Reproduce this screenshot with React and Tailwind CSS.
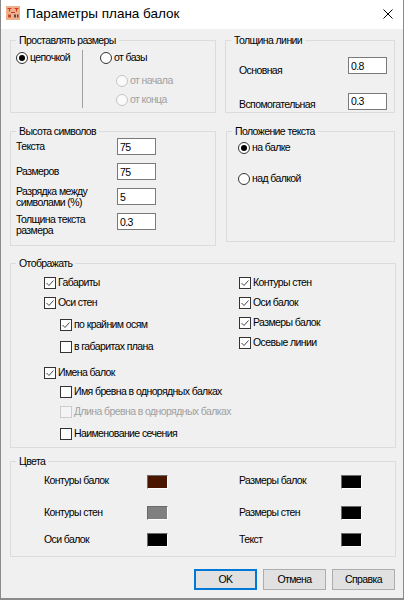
import React from 'react'

function AppIcon() {
  return (
    <svg width="14" height="14" viewBox="0 0 14 14" className="mt-[6px] ml-[5px] self-start">
      <rect width="14" height="14" fill="#efb08c" />
      <path d="M1.5 2.5h4M3.5 2.5v3M8.5 2.5h4M10.5 2.5v3" stroke="#d2361e" strokeWidth="1.2" fill="none" />
      <path d="M5 6.5h4" stroke="#c0392b" strokeWidth="1" />
      <rect x="2" y="8.5" width="3" height="3" fill="#c44a30" />
      <rect x="8" y="8.5" width="2" height="3" fill="#5b4a42" />
      <rect x="11" y="8.5" width="1.5" height="3" fill="#5b4a42" />
    </svg>
  )
}

function GroupBox({ title, className, children }) {
  return (
    <div className={`relative border border-[#dcdcdc] ${className}`}>
      <span className="absolute left-[5px] top-[-7px] bg-[#f0f0f0] px-[3px] leading-[13px] whitespace-nowrap">{title}</span>
      {children}
    </div>
  )
}

function Radio({ checked, disabled, label }) {
  return (
    <div className="flex h-[12px] items-center">
      <span
        className={`flex h-[12px] w-[12px] shrink-0 items-center justify-center rounded-full border ${
          disabled ? 'border-[#c4c4c4] bg-[#fafafa]' : 'border-[#333333] bg-white'
        }`}
      >
        {checked && <span className="h-[6px] w-[6px] rounded-full bg-black" />}
      </span>
      <span className={`ml-[2px] whitespace-nowrap ${disabled ? 'text-[#a0a0a0]' : ''}`}>{label}</span>
    </div>
  )
}

function Check({ checked, disabled, label, className = '' }) {
  return (
    <div className={`flex h-[12px] items-center ${className}`}>
      <span
        className={`flex h-[12px] w-[12px] shrink-0 items-center justify-center border ${
          disabled ? 'border-[#cccccc] bg-[#f4f4f4]' : 'border-[#333333] bg-white'
        }`}
      >
        {checked && (
          <svg width="10" height="10" viewBox="0 0 10 10">
            <path d="M1.5 5l2.5 2.5 4.5-5" fill="none" stroke="#444" strokeWidth="1" />
          </svg>
        )}
      </span>
      <span className={`ml-[2px] whitespace-nowrap ${disabled ? 'text-[#a0a0a0]' : ''}`}>{label}</span>
    </div>
  )
}

function Field({ value }) {
  return (
    <input
      readOnly
      value={value}
      className="h-[17px] w-[39px] shrink-0 border border-[#7a7a7a] bg-white pl-[2px] leading-[15px] outline-none"
    />
  )
}

function Swatch({ color }) {
  return (
    <span className={`h-[14px] w-[21px] shrink-0 border border-t-[#6a6a6a] border-l-[#6a6a6a] border-r-white border-b-white ${color}`} />
  )
}

function SizeRow({ label, value, top }) {
  return (
    <div className={`flex h-[17px] ${top ? 'items-start' : 'items-center'}`}>
      <span className={`w-[101px] leading-[11px] ${top ? 'mt-[1px]' : ''}`}>{label}</span>
      <Field value={value} />
    </div>
  )
}

export default function App() {
  return (
    <div className="flex h-[600px] w-[404px] flex-col border-x border-b-2 border-[#8a8a8a] bg-[#f0f0f0] font-['Liberation_Sans',Arial,sans-serif] text-[10.5px] tracking-[-0.6px] text-black">
      {/* Title bar */}
      <div className="flex h-[29px] shrink-0 bg-white">
        <AppIcon />
        <span className="ml-[6px] mt-[5px] text-[13.5px] leading-[18px] tracking-normal">Параметры плана балок</span>
        <svg width="10" height="10" viewBox="0 0 10 10" className="ml-auto mr-[10px] mt-[9px]">
          <path d="M0.5 0.5l9 9M9.5 0.5l-9 9" stroke="#000" strokeWidth="1" />
        </svg>
      </div>

      <div className="flex flex-1 flex-col pl-[9px] pr-[7px]">
        {/* Row 1 */}
        <div className="mt-[11px] flex gap-[9px]">
          <GroupBox title="Проставлять размеры" className="h-[73px] w-[206px]">
            <div className="flex h-full pl-[5px] pt-[9px] pb-[4px]">
              <div className="w-[66px] pt-[2px]">
                <Radio checked label="цепочкой" />
              </div>
              <div className="w-px bg-[#a0a0a0]" />
              <div className="pl-[17px] pt-[2px]">
                <Radio label="от базы" />
                <div className="ml-[16px] mt-[11px]">
                  <Radio disabled label="от начала" />
                </div>
                <div className="ml-[16px] mt-[7px]">
                  <Radio disabled label="от конца" />
                </div>
              </div>
            </div>
          </GroupBox>

          <GroupBox title="Толщина линии" className="h-[73px] w-[170px]">
            <div className="pl-[13px] pr-[7px] pt-[16px]">
              <div className="flex items-start justify-between">
                <span className="pt-[6px]">Основная</span>
                <Field value="0.8" />
              </div>
              <div className="mt-[14px] flex items-start justify-between">
                <span className="pt-[4px]">Вспомогательная</span>
                <Field value="0.3" />
              </div>
            </div>
          </GroupBox>
        </div>

        {/* Row 2 */}
        <div className="mt-[18px] flex items-start gap-[10px]">
          <GroupBox title="Высота символов" className="h-[115px] w-[206px]">
            <div className="flex flex-col gap-[8px] pl-[5px] pt-[6px]">
              <SizeRow label="Текста" value="75" />
              <SizeRow label="Размеров" value="75" />
              <SizeRow label={<>Разрядка между<br />символами (%)</>} value="5" />
              <SizeRow label={<>Толщина текста<br />размера</>} value="0.3" top />
            </div>
          </GroupBox>

          <GroupBox title="Положение текста" className="h-[111px] w-[169px]">
            <div className="pl-[11px] pt-[10px]">
              <Radio checked label="на балке" />
              <div className="mt-[19px]">
                <Radio label="над балкой" />
              </div>
            </div>
          </GroupBox>
        </div>

        {/* Row 3 */}
        <GroupBox title="Отображать" className="mt-[17px] h-[185px] w-[386px]">
          <div className="flex pl-[33px] pt-[13px]">
            <div className="w-[195px]">
              <Check checked label="Габариты" />
              <Check checked label="Оси стен" className="mt-[8px]" />
              <Check checked label="по крайним осям" className="ml-[16px] mt-[10px]" />
              <Check label="в габаритах плана" className="ml-[16px] mt-[10px]" />
              <Check checked label="Имена балок" className="mt-[14px]" />
              <Check label="Имя бревна в однорядных балках" className="ml-[16px] mt-[7px]" />
              <Check disabled label="Длина бревна в однорядных балках" className="ml-[16px] mt-[8px]" />
              <Check label="Наименование сечения" className="ml-[16px] mt-[10px]" />
            </div>
            <div>
              <Check checked label="Контуры стен" />
              <Check checked label="Оси балок" className="mt-[8px]" />
              <Check checked label="Размеры балок" className="mt-[8px]" />
              <Check checked label="Осевые линии" className="mt-[8px]" />
            </div>
          </div>
        </GroupBox>

        {/* Row 4 */}
        <GroupBox title="Цвета" className="mt-[13px] h-[96px] w-[386px]">
          <div className="pl-[33px] pt-[13px]">
            <div className="flex h-[14px] items-center">
              <div className="flex w-[195px] items-center">
                <span className="w-[103px] -mt-[3px]">Контуры балок</span>
                <Swatch color="bg-[#4a1600]" />
              </div>
              <span className="w-[102px] -mt-[3px]">Размеры балок</span>
              <Swatch color="bg-black" />
            </div>
            <div className="mt-[17px] flex h-[14px] items-center">
              <div className="flex w-[195px] items-center">
                <span className="w-[103px]">Контуры стен</span>
                <Swatch color="bg-[#808080]" />
              </div>
              <span className="w-[102px]">Размеры стен</span>
              <Swatch color="bg-black" />
            </div>
            <div className="mt-[13px] flex h-[14px] items-center">
              <div className="flex w-[195px] items-center">
                <span className="w-[103px]">Оси балок</span>
                <Swatch color="bg-black" />
              </div>
              <span className="w-[102px]">Текст</span>
              <Swatch color="bg-black" />
            </div>
          </div>
        </GroupBox>

        {/* Buttons */}
        <div className="mt-[12px] mr-[1px] flex justify-end gap-[6px]">
          <button className="h-[21px] w-[63px] border-2 border-[#0078d7] bg-[#e1e1e1]">OK</button>
          <button className="h-[21px] w-[63px] border border-[#adadad] bg-[#e1e1e1]">Отмена</button>
          <button className="h-[21px] w-[63px] border border-[#adadad] bg-[#e1e1e1]">Справка</button>
        </div>
      </div>
    </div>
  )
}
